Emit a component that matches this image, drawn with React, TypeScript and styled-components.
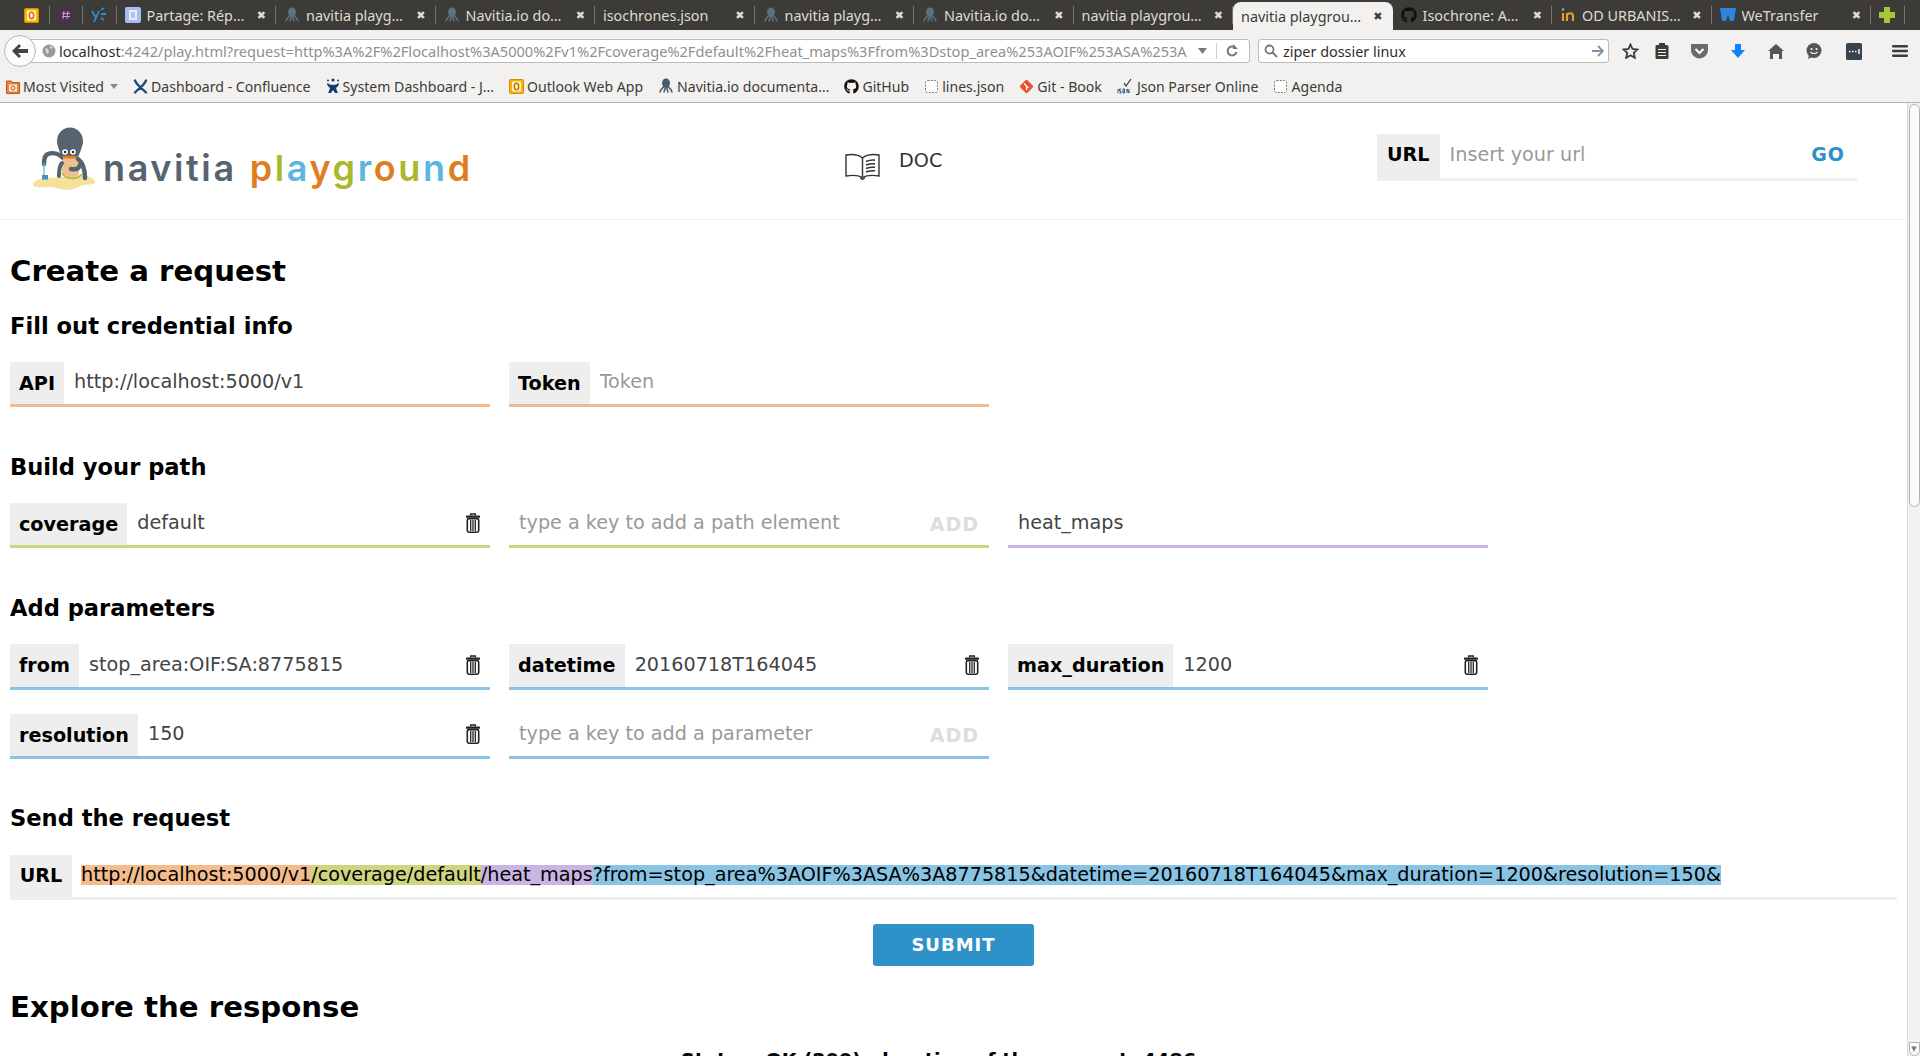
import styled, { createGlobalStyle } from "styled-components";
import { FaGithub } from "react-icons/fa";

const GlobalStyle = createGlobalStyle`
  html, body {
    margin: 0;
    padding: 0;
    height: 100%;
    overflow: hidden;
    background: #fff;
  }
  * { box-sizing: border-box; }
`;

const Shell = styled.div`
  display: flex;
  flex-direction: column;
  height: 1056px;
  overflow: hidden;
  font-family: "DejaVu Sans", sans-serif;
`;

/* browser chrome */
const TabStrip = styled.div`
  display: flex;
  flex: none;
  height: 30px;
  padding-left: 16px;
  background: #3c3b37;
  font-family: "Noto Sans", sans-serif;
  font-size: 14.4px;
`;

const Tab = styled.div<{ $active?: boolean; $pinned?: boolean }>`
  display: flex;
  align-items: center;
  gap: 6px;
  flex: none;
  width: ${({ $pinned }) => ($pinned ? "33.5px" : "159.5px")};
  height: ${({ $active }) => ($active ? "28px" : "30px")};
  margin-top: ${({ $active }) => ($active ? "2px" : "0")};
  padding: ${({ $pinned }) => ($pinned ? "0 8px" : "0 10px 0 8px")};
  color: ${({ $active }) => ($active ? "#3c3b37" : "#dfdbd2")};
  background: ${({ $active }) => ($active ? "#f2f1f0" : "transparent")};
  border-radius: ${({ $active }) => ($active ? "8px 8px 0 0" : "0")};
  position: relative;
  &::after {
    content: "";
    display: ${({ $active }) => ($active ? "none" : "block")};
    position: absolute;
    right: 0;
    top: 6px;
    bottom: 6px;
    width: 1px;
    background: #76746e;
  }
`;

const TabTitle = styled.span`
  flex: 1;
  min-width: 0;
  white-space: nowrap;
  overflow: hidden;
`;

const TabClose = styled.span`
  flex: none;
  font-size: 11px;
  font-weight: 700;
  font-family: "DejaVu Sans", sans-serif;
`;

const NavBar = styled.div`
  display: flex;
  flex: none;
  align-items: center;
  height: 42px;
  padding: 0 4px;
  background: #f2f1f0;
`;

const BackButton = styled.div`
  display: flex;
  align-items: center;
  justify-content: center;
  flex: none;
  width: 32px;
  height: 32px;
  border: 1px solid #b8b6b2;
  border-radius: 50%;
  background: #fbfbfa;
  z-index: 1;
`;

const AddressBar = styled.div`
  display: flex;
  align-items: center;
  flex: none;
  width: 1220px;
  height: 24px;
  margin-left: -6px;
  padding: 0 10px 0 11px;
  border: 1px solid #bdbbb7;
  border-radius: 0 3px 3px 0;
  background: #fff;
  font-family: "Noto Sans", sans-serif;
  font-size: 14.6px;
  color: #8f8f8f;
`;

const Host = styled.span`
  color: #2e2e2e;
`;

const AddressText = styled.span`
  flex: 1;
  min-width: 0;
  margin-left: 3px;
  white-space: nowrap;
  overflow: hidden;
`;

const BarDivider = styled.span`
  width: 1px;
  height: 16px;
  margin: 0 8px;
  background: #d4d2ce;
`;

const SearchBar = styled.div`
  display: flex;
  align-items: center;
  gap: 5px;
  flex: none;
  width: 351px;
  height: 24px;
  margin-left: 8px;
  padding: 0 4px 0 5px;
  border: 1px solid #bdbbb7;
  border-radius: 3px;
  background: #fff;
  font-family: "Noto Sans", sans-serif;
  font-size: 14.4px;
  color: #2e2e2e;
`;

const SearchText = styled.span`
  flex: 1;
`;

const ToolIcon = styled.span<{ $width: number }>`
  display: flex;
  align-items: center;
  justify-content: center;
  flex: none;
  width: ${({ $width }) => $width}px;
  height: 24px;
`;

const Bookmarks = styled.div`
  display: flex;
  flex: none;
  align-items: center;
  gap: 15px;
  height: 31px;
  padding: 0 0 2px 6px;
  background: #f2f1f0;
  border-bottom: 1px solid #b5b3af;
  font-family: "Noto Sans", sans-serif;
  font-size: 14.1px;
  color: #3c3b37;
`;

const Bookmark = styled.span`
  display: flex;
  align-items: center;
  gap: 3px;
  white-space: nowrap;
`;

const BookmarkArrow = styled.svg`
  margin-left: 3px;
`;

/* page */
const Page = styled.div`
  display: flex;
  flex: 1;
  min-height: 0;
`;

const Content = styled.div`
  flex: 1;
  min-width: 0;
  overflow: hidden;
`;

const Scrollbar = styled.div`
  display: flex;
  flex-direction: column;
  align-items: center;
  flex: none;
  width: 13px;
  padding-top: 1px;
  border-left: 1px solid #d9d8d6;
  background: #f2f1f0;
`;

const ScrollThumb = styled.div`
  width: 11px;
  height: 403px;
  border: 1px solid #b4b2ae;
  border-radius: 6px;
  background: #fbfbfa;
`;

const ScrollEnd = styled.div`
  margin-top: auto;
  width: 11px;
  height: 14px;
  border: 1px solid #b4b2ae;
  border-radius: 0 0 6px 6px;
  color: #777;
  font-size: 7px;
  line-height: 12px;
  text-align: center;
  background: #fbfbfa;
`;

const Header = styled.header`
  display: flex;
  align-items: center;
  height: 117px;
  border-bottom: 1px solid #f2f2f2;
`;

const Logo = styled.div`
  display: flex;
  align-items: center;
  flex: none;
  width: 845px;
  margin-top: -4px;
  padding-left: 32px;
`;

const LogoWords = styled.div`
  display: flex;
  gap: 13px;
  margin-left: 7px;
  margin-top: 17px;
  font-family: "Inter", sans-serif;
  font-size: 36px;
  font-weight: 600;
  letter-spacing: 2.6px;
  line-height: 44px;
`;

const LogoGrey = styled.span`
  color: #56646f;
`;

const LogoLetter = styled.span<{ $color: string }>`
  color: ${({ $color }) => $color};
`;

const DocLink = styled.div`
  display: flex;
  align-items: center;
  gap: 19px;
  flex: none;
  width: 532px;
  margin-top: 10px;
  font-size: 19.2px;
  color: #333;
`;

const DocLabel = styled.span`
  margin-top: -11px;
`;

const HeaderUrl = styled.div`
  display: flex;
  flex: none;
  width: 480px;
  height: 47px;
  margin-top: -7px;
  border-bottom: 3px solid #eee;
`;

const HeaderUrlLabel = styled.span`
  display: flex;
  align-items: center;
  padding: 0 10px 4px;
  background: #eee;
  font-size: 19.2px;
  font-weight: 700;
  color: #000;
`;

const HeaderUrlInput = styled.input`
  flex: 1;
  min-width: 0;
  padding: 0 10px 4px;
  border: 0;
  outline: 0;
  background: transparent;
  font: 19.2px "DejaVu Sans", sans-serif;
  &::placeholder { color: #999; opacity: 1; }
`;

const GoButton = styled.span`
  align-self: center;
  padding: 0 12px 4px 0;
  font-size: 19px;
  font-weight: 700;
  letter-spacing: 1px;
  color: #2e91c7;
`;

const Main = styled.main`
  padding: 0 10px;
`;

const Title = styled.h1<{ $top: number }>`
  margin: ${({ $top }) => $top}px 0 0;
  font-size: 29.2px;
  line-height: 36px;
  font-weight: 700;
  color: #000;
`;

const SubTitle = styled.h2<{ $top: number }>`
  margin: ${({ $top }) => $top}px 0 0;
  font-size: 22.6px;
  line-height: 30px;
  font-weight: 700;
  color: #000;
`;

const FieldGrid = styled.div`
  display: grid;
  grid-template-columns: repeat(3, 480px);
  column-gap: 19px;
  row-gap: 24px;
  margin-top: 21px;
`;

const Field = styled.div<{ $color: string; $tall?: boolean }>`
  display: flex;
  align-items: stretch;
  height: ${({ $tall }) => ($tall ? "46px" : "45px")};
  border-bottom: 3px solid ${({ $color }) => $color};
`;

const FieldLabel = styled.span`
  display: flex;
  align-items: center;
  flex: none;
  padding: 0 9px;
  background: #eee;
  font-size: 19.2px;
  font-weight: 700;
  color: #000;
`;

const FieldInput = styled.input`
  flex: 1;
  min-width: 0;
  padding: 0 9px 3px 10px;
  border: 0;
  outline: 0;
  background: transparent;
  font: 19.2px "DejaVu Sans", sans-serif;
  color: #444;
  &::placeholder { color: #999; opacity: 1; }
`;

const AddLabel = styled.span`
  align-self: center;
  padding: 0 10px 1px 0;
  font-size: 19px;
  font-weight: 700;
  letter-spacing: 1px;
  color: #ddd;
`;

const TrashButton = styled.span`
  display: flex;
  align-items: center;
  padding: 0 10px 2px 0;
`;

const UrlRow = styled.div`
  display: flex;
  align-items: stretch;
  height: 45px;
  margin-top: 22px;
  border-bottom: 3px solid #eee;
`;

const UrlLabel = styled.span`
  display: flex;
  align-items: center;
  flex: none;
  width: 62px;
  padding-bottom: 2px;
  justify-content: center;
  background: #eee;
  font-size: 19.2px;
  font-weight: 700;
  color: #000;
`;

const UrlText = styled.div`
  display: flex;
  align-items: center;
  padding: 0 0 2px 9px;
  font-size: 19.2px;
  color: #000;
  white-space: nowrap;
`;

const UrlPart = styled.span<{ $color: string }>`
  background: ${({ $color }) => $color};
  line-height: 20px;
`;

const SubmitRow = styled.div`
  display: flex;
  justify-content: center;
  margin-top: 24px;
`;

const SubmitButton = styled.button`
  width: 161px;
  height: 42px;
  padding: 0 0 2px;
  border: 0;
  border-radius: 3px;
  background: #2e91c7;
  color: #fff;
  font: 700 18px "DejaVu Sans", sans-serif;
  letter-spacing: 1px;
`;

const Status = styled.div`
  margin-top: 24px;
  padding-right: 30px;
  text-align: center;
  font-size: 19.2px;
  font-weight: 700;
  color: #000;
`;

/* small drawings */
const Octopus = ({ color = "#56646f", size = 16 }: { color?: string; size?: number }) => (
  <svg width={size} height={size} viewBox="0 0 16 16" fill="none">
    <ellipse cx="8" cy="5" rx="4" ry="4.5" fill={color} />
    <path d="M6 8c-1 3-3 2-4 6M7.3 9c0 2-.8 3-1.3 5M8.7 9c0 2 .8 3 1.3 5M10 8c1 3 3 2 4 6" stroke={color} strokeWidth="1.5" strokeLinecap="round" />
  </svg>
);

const Trash = () => (
  <svg width="14" height="20" viewBox="0 0 14 20">
    <path d="M4.6 2.6V1h4.8v1.6" fill="none" stroke="#222" strokeWidth="1.3" />
    <rect x="0" y="2.6" width="14" height="2.2" rx="0.6" fill="#222" />
    <rect x="1.3" y="5.6" width="11.4" height="13.6" rx="1.6" fill="none" stroke="#222" strokeWidth="1.6" />
    <path d="M4.7 7v11M7 7v11M9.3 7v11" stroke="#222" strokeWidth="1.3" />
  </svg>
);

const BookIcon = () => (
  <svg width="35" height="27" viewBox="0 0 35 27" fill="none" stroke="#333" strokeWidth="1.4">
    <path d="M17.5 5C14 2 7 1 1 2v21c6-1 13-.5 16.5 1.5C21 22.5 28 22 34 23V2c-6-1-13 0-16.5 3z" />
    <path d="M17.5 5v19.5M15 24.5l2.5 2 2.5-2" />
    <path d="M21 8.5c3-1.4 6-1.6 9-1.4M21 12c3-1.2 6-1.4 9-1.2M21 15.5c3-1.2 6-1.4 9-1.2M21 19c3-1.2 6-1.4 9-1.2" strokeWidth="1.6" />
  </svg>
);

const LogoMark = () => (
  <svg width="64" height="64" viewBox="0 0 64 64">
    <path d="M1 57c1-4 8-6 15-6 10 0 30-3 38-2 5 1 9 3 9 6 0 3-6 2-11 3-6 1-9 5-17 5-7 0-10-3-16-3-7 0-19 2-18-3z" fill="#f7e19a" />
    <path d="M31 31c-4-4-10-6-15-4-3 1-4 5-4 10" fill="none" stroke="#56646f" strokeWidth="4.5" strokeLinecap="round" />
    <path d="M12 36v13" stroke="#6db9e0" strokeWidth="1.3" />
    <rect x="10" y="48" width="6" height="4.5" fill="#3f90c6" />
    <ellipse cx="38" cy="14" rx="13" ry="13.5" fill="#56646f" />
    <path d="M26 17c0 6 3 9 4 14h16c1-5 4-8 4-14z" fill="#56646f" />
    <path d="M31 30h15l1 15c0 4-3 6-8 6s-9-2-9-6z" fill="#efc08f" />
    <path d="M31 29h15v2.5H31z" fill="#e07d22" />
    <path d="M30 46c3 6 14 8 20 1" fill="none" stroke="#a9b82e" strokeWidth="1.4" />
    <path d="M46 32c4 3 7 9 7 19" fill="none" stroke="#56646f" strokeWidth="4.5" strokeLinecap="round" />
    <path d="M39 42c5 1 8 0 9-4" fill="none" stroke="#56646f" strokeWidth="4.5" strokeLinecap="round" />
    <path d="M30 36c-3 3-3 8-3 13" fill="none" stroke="#56646f" strokeWidth="4" strokeLinecap="round" />
    <circle cx="33" cy="25" r="2.8" fill="#fff" />
    <circle cx="41" cy="25" r="2.8" fill="#fff" />
    <circle cx="33" cy="25" r="1.2" fill="#222" />
    <circle cx="41" cy="25" r="1.2" fill="#222" />
  </svg>
);

const OutlookIcon = () => (
  <svg width="15" height="15" viewBox="0 0 15 15">
    <rect x="0.5" y="0.5" width="14" height="14" rx="1" fill="#f9b208" stroke="#d88a00" />
    <rect x="3" y="2.5" width="9" height="10" rx="1" fill="#fff3c8" />
    <ellipse cx="7.5" cy="7.5" rx="2.2" ry="3.2" fill="none" stroke="#c97a00" strokeWidth="1.6" />
  </svg>
);

const DashedIcon = () => (
  <svg width="15" height="15" viewBox="0 0 15 15">
    <rect x="1.5" y="1.5" width="12" height="12" rx="2" fill="#fff" stroke="#777" strokeDasharray="2 1.3" />
  </svg>
);

const ConfluenceIcon = () => (
  <svg width="15" height="15" viewBox="0 0 15 15" fill="none" stroke="#1d4a80" strokeWidth="2.4" strokeLinecap="round">
    <path d="M2 1.5c2 5 7 8 11 12M13 1.5C11 6.5 6 9.5 2 13.5" />
  </svg>
);

const JiraIcon = () => (
  <svg width="14" height="16" viewBox="0 0 14 16" fill="#123e70">
    <circle cx="7" cy="2" r="1.6" />
    <circle cx="2" cy="2.5" r="1" />
    <circle cx="12" cy="2.5" r="1" />
    <path d="M1 5c2 1 4 2 6 2s4-1 6-2c0 3-2 4-3 5 1 2 1 4 2 5H9L7 12l-2 3H2c1-1 1-3 2-5-1-1-3-2-3-5z" />
  </svg>
);

const GitIcon = () => (
  <svg width="15" height="15" viewBox="0 0 15 15">
    <rect x="2.4" y="2.4" width="10.2" height="10.2" rx="1.4" fill="#e9502f" transform="rotate(45 7.5 7.5)" />
    <path d="M5 4.5l4.5 4.5M7.5 7v4" stroke="#fff" strokeWidth="1.2" />
  </svg>
);

const JsonIcon = () => (
  <svg width="17" height="16" viewBox="0 0 17 16" fill="none">
    <path d="M7 5l2 3 5-7" stroke="#333" strokeWidth="1.2" />
    <path d="M1 11v4M4 11H2.5v2H4v2H2.5M6 11h1.5v4H6zM10 15v-4l2 4v-4" stroke="#16427a" strokeWidth="0.9" />
  </svg>
);

const FolderIcon = () => (
  <svg width="14" height="15" viewBox="0 0 14 15">
    <path d="M0.5 2h5l1 1.5h7v11h-13z" fill="#e8833a" stroke="#b85c1d" />
    <rect x="3" y="5.5" width="8" height="7" fill="#fbe6d3" />
    <circle cx="7" cy="9" r="2" fill="none" stroke="#b85c1d" />
  </svg>
);

const DocFavicon = () => (
  <svg width="16" height="16" viewBox="0 0 16 16">
    <rect width="16" height="16" rx="2" fill="#a9bdf5" />
    <rect x="4" y="3" width="8" height="10" fill="#e8edfc" />
    <path d="M6 6h4M6 8h4M6 10h4" stroke="#7f97de" />
  </svg>
);

const IndiaFavicon = () => (
  <svg width="16" height="16" viewBox="0 0 16 16" fill="none" stroke="#e0a12b" strokeWidth="2.2">
    <path d="M3 6v8M7 14V6M7 8c1-2 6-3 6 1v5" />
    <circle cx="3" cy="2.5" r="1.2" fill="#aaa" stroke="none" />
  </svg>
);

const WeTransferFavicon = () => (
  <svg width="16" height="14" viewBox="0 0 16 14">
    <path d="M0 0h16l-2 13H10L8 7l-2 6H2z" fill="#2b86d9" />
  </svg>
);

const tabs = [
  { title: "Partage: Rép…", icon: <DocFavicon /> },
  { title: "navitia playg…", icon: <Octopus color="#5a7180" /> },
  { title: "Navitia.io do…", icon: <Octopus color="#5a7180" /> },
  { title: "isochrones.json" },
  { title: "navitia playg…", icon: <Octopus color="#5a7180" /> },
  { title: "Navitia.io do…", icon: <Octopus color="#5a7180" /> },
  { title: "navitia playgrou…" },
  { title: "navitia playgrou…", active: true },
  { title: "Isochrone: A…", icon: <FaGithub size={16} color="#111" /> },
  { title: "OD URBANIS…", icon: <IndiaFavicon /> },
  { title: "WeTransfer", icon: <WeTransferFavicon /> },
];

const bookmarks = [
  { label: "Dashboard - Confluence", icon: <ConfluenceIcon /> },
  { label: "System Dashboard - J…", icon: <JiraIcon /> },
  { label: "Outlook Web App", icon: <OutlookIcon /> },
  { label: "Navitia.io documenta…", icon: <Octopus color="#4a5a66" /> },
  { label: "GitHub", icon: <FaGithub size={15} color="#111" /> },
  { label: "lines.json", icon: <DashedIcon /> },
  { label: "Git - Book", icon: <GitIcon /> },
  { label: "Json Parser Online", icon: <JsonIcon /> },
  { label: "Agenda", icon: <DashedIcon /> },
];

const playgroundColors = ["#e07d22", "#a9b82e", "#5cb6e0", "#e07d22", "#a9b82e", "#5cb6e0", "#e07d22", "#a9b82e", "#5cb6e0", "#e07d22"];

const ORANGE = "#f4bc8c";
const GREEN = "#cfd47f";
const PURPLE = "#c9b5e3";
const BLUE = "#89c4e4";

const App = () => (
  <Shell>
    <GlobalStyle />
    <TabStrip>
      <Tab $pinned><OutlookIcon /></Tab>
      <Tab $pinned>
        <svg width="16" height="16" viewBox="0 0 16 16" fill="none">
          <rect width="16" height="16" fill="#4a3050" />
          <path d="M6 4l-1 8M10 4l-1 8M4 6.5h8M4 9.5h8" stroke="#b9a9be" />
        </svg>
      </Tab>
      <Tab $pinned>
        <svg width="16" height="16" viewBox="0 0 16 16" fill="none" stroke="#2b8fd6" strokeWidth="1.8">
          <path d="M1 4l3.5 6M8 4L3 15M10 3l3-2M10 7h5M10 11l3 2" />
        </svg>
      </Tab>
      {tabs.map((tab, i) => (
        <Tab key={i} $active={tab.active}>
          {tab.icon}
          <TabTitle>{tab.title}</TabTitle>
          <TabClose>✖</TabClose>
        </Tab>
      ))}
      <Tab $pinned>
        <svg width="16" height="16" viewBox="0 0 16 16">
          <path d="M5 0h6v5h5v6h-5v5H5v-5H0V5h5z" fill="#a4c639" />
        </svg>
      </Tab>
    </TabStrip>

    <NavBar>
      <BackButton>
        <svg width="16" height="14" viewBox="0 0 16 14">
          <path d="M7 0l2 2-3 3h10v4H6l3 3-2 2-7-7z" fill="#444" />
        </svg>
      </BackButton>
      <AddressBar>
        <svg width="14" height="14" viewBox="0 0 14 14">
          <circle cx="7" cy="7" r="6.5" fill="#9a9a9a" />
          <path d="M3 4l3 1 1 3-2 2-1-2zM8 2l3 1-1 2-2-1z" fill="#dcdcdc" />
        </svg>
        <AddressText>
          <Host>localhost</Host>:4242/play.html?request=http%3A%2F%2Flocalhost%3A5000%2Fv1%2Fcoverage%2Fdefault%2Fheat_maps%3Ffrom%3Dstop_area%253AOIF%253ASA%253A
        </AddressText>
        <svg width="10" height="6" viewBox="0 0 10 6"><path d="M0 0h9L4.5 6z" fill="#777" /></svg>
        <BarDivider />
        <svg width="14" height="14" viewBox="0 0 14 14" fill="none" stroke="#777" strokeWidth="2">
          <path d="M11.5 8a4.5 4.5 0 1 1-1.5-4.5" />
          <path d="M8 0v5h5z" fill="#777" stroke="none" />
        </svg>
      </AddressBar>
      <SearchBar>
        <svg width="14" height="14" viewBox="0 0 14 14" fill="none" stroke="#777" strokeWidth="1.8">
          <circle cx="5.5" cy="5.5" r="4" />
          <path d="M8.5 8.5l4.5 4.5" />
        </svg>
        <SearchText>ziper dossier linux</SearchText>
        <svg width="12" height="12" viewBox="0 0 12 12" fill="none" stroke="#7f93a6" strokeWidth="1.8">
          <path d="M0 6h10M6 1l5 5-5 5" />
        </svg>
      </SearchBar>
      <ToolIcon $width={42}>
        <svg width="17" height="16" viewBox="0 0 17 16" fill="none" stroke="#3c3b37" strokeWidth="1.8">
          <path d="M8.5 1.5l2 4.5 5 .5-3.7 3.3 1 5-4.3-2.6-4.3 2.6 1-5L1.500 6.5l5-.5z" />
        </svg>
      </ToolIcon>
      <ToolIcon $width={22}>
        <svg width="14" height="16" viewBox="0 0 14 16">
          <rect x="0.5" y="2" width="13" height="14" rx="1.5" fill="#3c3b37" />
          <rect x="4" y="0" width="6" height="4" fill="#3c3b37" />
          <path d="M3 6.5h8M3 9.5h8M3 12.5h8" stroke="#f2f1f0" strokeWidth="1.2" />
        </svg>
      </ToolIcon>
      <ToolIcon $width={52}>
        <svg width="17" height="15" viewBox="0 0 17 15">
          <path d="M1 0h15a1 1 0 0 1 1 1v5a8.5 8.5 0 0 1-17 0V1a1 1 0 0 1 1-1z" fill="#6a6a6a" />
          <path d="M4.5 5l4 4 4-4" fill="none" stroke="#fff" strokeWidth="2" />
        </svg>
      </ToolIcon>
      <ToolIcon $width={26}>
        <svg width="14" height="14" viewBox="0 0 14 14">
          <path d="M4 0h6v6h4l-7 8-7-8h4z" fill="#0a84ff" />
        </svg>
      </ToolIcon>
      <ToolIcon $width={50}>
        <svg width="16" height="15" viewBox="0 0 16 15">
          <path d="M8 0l8 7h-2v8h-3v-5H5v5H2V7H0z" fill="#555" />
        </svg>
      </ToolIcon>
      <ToolIcon $width={26}>
        <svg width="16" height="16" viewBox="0 0 16 16">
          <circle cx="8" cy="7.5" r="7.5" fill="#555" />
          <path d="M3 12l-1 4 4-2z" fill="#555" />
          <circle cx="5.5" cy="6" r="1" fill="#fff" />
          <circle cx="10.5" cy="6" r="1" fill="#fff" />
          <path d="M4.5 9c2 2 5 2 7 0" fill="none" stroke="#fff" strokeWidth="1.2" />
        </svg>
      </ToolIcon>
      <ToolIcon $width={54}>
        <svg width="16" height="17" viewBox="0 0 16 17">
          <rect width="16" height="17" rx="1.5" fill="#38434f" />
          <path d="M3 8.5h1.5M6 8.5h1.5M9 8.5h1.5M13 6v5" stroke="#fff" strokeWidth="1.4" />
        </svg>
      </ToolIcon>
      <ToolIcon $width={38}>
        <svg width="16" height="12" viewBox="0 0 16 12" fill="#3c3b37">
          <rect width="16" height="2.4" rx="1" />
          <rect y="4.8" width="16" height="2.4" rx="1" />
          <rect y="9.6" width="16" height="2.4" rx="1" />
        </svg>
      </ToolIcon>
    </NavBar>

    <Bookmarks>
      <Bookmark>
        <FolderIcon />
        Most Visited
        <BookmarkArrow width="8" height="5" viewBox="0 0 8 5"><path d="M0 0h8L4 5z" fill="#888" /></BookmarkArrow>
      </Bookmark>
      {bookmarks.map((b) => (
        <Bookmark key={b.label}>{b.icon}{b.label}</Bookmark>
      ))}
    </Bookmarks>

    <Page>
      <Content>
        <Header>
          <Logo>
            <LogoMark />
            <LogoWords>
              <LogoGrey>navitia</LogoGrey>
              <span>
                {"playground".split("").map((ch, i) => (
                  <LogoLetter key={i} $color={playgroundColors[i]}>{ch}</LogoLetter>
                ))}
              </span>
            </LogoWords>
          </Logo>
          <DocLink>
            <BookIcon />
            <DocLabel>DOC</DocLabel>
          </DocLink>
          <HeaderUrl>
            <HeaderUrlLabel>URL</HeaderUrlLabel>
            <HeaderUrlInput placeholder="Insert your url" readOnly />
            <GoButton>GO</GoButton>
          </HeaderUrl>
        </Header>

        <Main>
          <Title $top={33}>Create a request</Title>

          <SubTitle $top={22}>Fill out credential info</SubTitle>
          <FieldGrid>
            <Field $color={ORANGE}>
              <FieldLabel>API</FieldLabel>
              <FieldInput defaultValue="http://localhost:5000/v1" readOnly />
            </Field>
            <Field $color={ORANGE}>
              <FieldLabel>Token</FieldLabel>
              <FieldInput placeholder="Token" readOnly />
            </Field>
          </FieldGrid>

          <SubTitle $top={45}>Build your path</SubTitle>
          <FieldGrid>
            <Field $color={GREEN}>
              <FieldLabel>coverage</FieldLabel>
              <FieldInput defaultValue="default" readOnly />
              <TrashButton><Trash /></TrashButton>
            </Field>
            <Field $color={GREEN}>
              <FieldInput placeholder="type a key to add a path element" readOnly />
              <AddLabel>ADD</AddLabel>
            </Field>
            <Field $color={PURPLE}>
              <FieldInput defaultValue="heat_maps" readOnly />
            </Field>
          </FieldGrid>

          <SubTitle $top={45}>Add parameters</SubTitle>
          <FieldGrid>
            <Field $color={BLUE} $tall>
              <FieldLabel>from</FieldLabel>
              <FieldInput defaultValue="stop_area:OIF:SA:8775815" readOnly />
              <TrashButton><Trash /></TrashButton>
            </Field>
            <Field $color={BLUE} $tall>
              <FieldLabel>datetime</FieldLabel>
              <FieldInput defaultValue="20160718T164045" readOnly />
              <TrashButton><Trash /></TrashButton>
            </Field>
            <Field $color={BLUE} $tall>
              <FieldLabel>max_duration</FieldLabel>
              <FieldInput defaultValue="1200" readOnly />
              <TrashButton><Trash /></TrashButton>
            </Field>
            <Field $color={BLUE}>
              <FieldLabel>resolution</FieldLabel>
              <FieldInput defaultValue="150" readOnly />
              <TrashButton><Trash /></TrashButton>
            </Field>
            <Field $color={BLUE}>
              <FieldInput placeholder="type a key to add a parameter" readOnly />
              <AddLabel>ADD</AddLabel>
            </Field>
          </FieldGrid>

          <SubTitle $top={44}>Send the request</SubTitle>
          <UrlRow>
            <UrlLabel>URL</UrlLabel>
            <UrlText>
              <UrlPart $color={ORANGE}>http://localhost:5000/v1</UrlPart>
              <UrlPart $color={GREEN}>/coverage/default</UrlPart>
              <UrlPart $color={PURPLE}>/heat_maps</UrlPart>
              <UrlPart $color={BLUE}>?from=stop_area%3AOIF%3ASA%3A8775815&amp;datetime=20160718T164045&amp;max_duration=1200&amp;resolution=150&amp;</UrlPart>
            </UrlText>
          </UrlRow>

          <SubmitRow>
            <SubmitButton>SUBMIT</SubmitButton>
          </SubmitRow>

          <Title $top={23}>Explore the response</Title>
          <Status>Status: OK (200), duration of the request: 4486</Status>
        </Main>
      </Content>
      <Scrollbar>
        <ScrollThumb />
        <ScrollEnd>▼</ScrollEnd>
      </Scrollbar>
    </Page>
  </Shell>
);

export default App;
